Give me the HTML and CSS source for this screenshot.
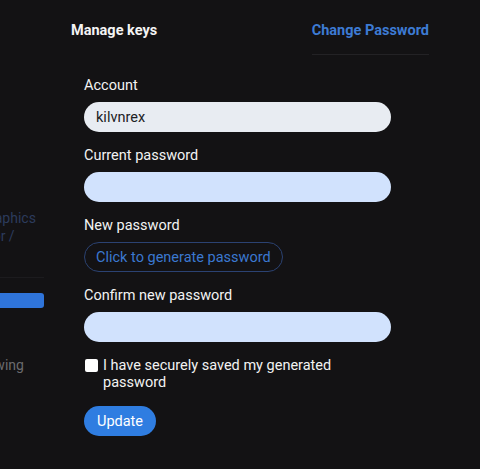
FILE: index.html
```html
<!DOCTYPE html>
<html lang="en">
<head>
  <meta charset="UTF-8">
  <meta name="viewport" content="width=device-width, initial-scale=1.0">
  <title>Change Password</title>
  <link rel="stylesheet" href="styles.css">
</head>
<body>
  <aside class="sidebar">
    <div class="sidebar-inner">
      <a class="side-link link-a" href="#">Motion graphics</a>
      <a class="side-link link-b" href="#">Illustrator /</a>
      <div class="side-divider"></div>
      <button class="side-button" type="button">Upgrade</button>
      <span class="side-muted">Following</span>
    </div>
  </aside>

  <main class="panel">
    <header class="panel-header">
      <h1>Manage keys</h1>
      <nav class="tabs">
        <a class="tab active" href="#">Change Password</a>
      </nav>
    </header>

    <form class="password-form" id="passwordForm">
      <div class="field">
        <label for="account">Account</label>
        <input class="input input-readonly" id="account" type="text" value="kilvnrex" readonly>
      </div>
      <div class="field">
        <label for="current">Current password</label>
        <input class="input" id="current" type="password">
      </div>
      <div class="field">
        <label>New password</label>
        <div>
          <button class="btn-outline" type="button">Click to generate password</button>
        </div>
      </div>
      <div class="field">
        <label for="confirm">Confirm new password</label>
        <input class="input" id="confirm" type="password">
      </div>
      <label class="check-row">
        <input class="check" type="checkbox">
        <span>I have securely saved my generated password</span>
      </label>
      <div>
        <button class="btn-primary" type="submit">Update</button>
      </div>
    </form>
  </main>
</body>
</html>
```

FILE: styles.css
```css
body {
  margin: 0;
  padding: 0;
  background-color: #131214;
  color: #f2f2f2;
  font-family: Roboto, "Liberation Sans", sans-serif;
  font-size: 14.5px;
  display: flex;
  min-height: 469px;
}
.sidebar {
  width: 44px;
  flex: none;
  overflow: hidden;
  font-size: 14px;
}
.sidebar-inner {
  width: 150px;
  margin-left: -106px;
  padding-top: 209px;
  display: flex;
  flex-direction: column;
}
.side-link {
  color: #2c3b5c;
  text-decoration: none;
  line-height: 18px;
  white-space: nowrap;
}
.link-a {
  padding-left: 41px;
}
.link-b {
  padding-left: 52px;
}
.side-divider {
  height: 1px;
  background-color: #1c1b1e;
  margin: 32px 0 15px;
}
.side-button {
  height: 15px;
  width: 150px;
  border: none;
  border-radius: 3px;
  padding: 0 0 0 8px;
  text-align: left;
  background-color: #2f74da;
  color: #ffffff;
  font-size: 11px;
  line-height: 15px;
}
.side-muted {
  color: #6b6b6e;
  line-height: 18px;
  margin-top: 48px;
  padding-left: 70px;
  white-space: nowrap;
}
.panel {
  flex: 1;
  padding-left: 27px;
}
.panel-header {
  width: 358px;
  display: flex;
  justify-content: space-between;
  align-items: flex-start;
  padding-top: 21px;
}
.panel-header h1 {
  margin: 0;
  font-size: 14.5px;
  font-weight: 700;
  line-height: 20px;
  color: #f4f4f4;
}
.tabs {
  display: flex;
}
.tab {
  display: block;
  font-weight: 700;
  line-height: 20px;
  padding-bottom: 13px;
  text-decoration: none;
  color: #3d7bd4;
  border-bottom: 1px solid #232225;
}
.password-form {
  margin-left: 13px;
  margin-top: 21px;
  width: 307px;
  display: flex;
  flex-direction: column;
  gap: 14px;
}
.field {
  display: flex;
  flex-direction: column;
  gap: 6px;
}
.field label {
  line-height: 20px;
  color: #f2f2f2;
}
.input {
  box-sizing: border-box;
  height: 30px;
  width: 307px;
  border: none;
  border-radius: 15px;
  padding: 0 12px;
  background-color: #d1e2fd;
  color: #202124;
  font-family: Roboto, "Liberation Sans", sans-serif;
  font-size: 14.5px;
  outline: none;
}
.input-readonly {
  background-color: #e8ecf2;
}
.btn-outline {
  box-sizing: border-box;
  height: 30px;
  padding: 0 11px;
  border: 1px solid #2b4272;
  border-radius: 15px;
  background: transparent;
  color: #3b78d0;
  font-family: Roboto, "Liberation Sans", sans-serif;
  font-size: 14.5px;
  cursor: pointer;
}
.check-row {
  display: flex;
  align-items: flex-start;
  gap: 5px;
  line-height: 17px;
  padding-top: 1px;
  padding-right: 55px;
  margin-bottom: 1px;
  color: #f2f2f2;
}
.check {
  appearance: none;
  margin: 2px 0 0 1px;
  width: 13px;
  height: 13px;
  flex: none;
  background-color: #ffffff;
  border-radius: 2px;
}
.btn-primary {
  box-sizing: border-box;
  height: 30px;
  padding: 0 13px;
  border: none;
  border-radius: 15px;
  background-color: #2f7de1;
  color: #ffffff;
  font-family: Roboto, "Liberation Sans", sans-serif;
  font-size: 14.5px;
  cursor: pointer;
}
```
